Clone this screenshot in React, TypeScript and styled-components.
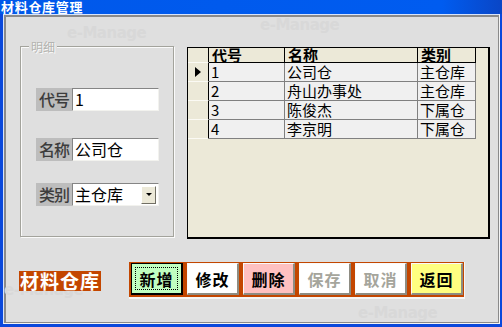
import React from 'react';
import styled, { createGlobalStyle } from 'styled-components';

const GlobalStyle = createGlobalStyle`
  html, body {
    margin: 0;
    padding: 0;
    background: #dfdfdf;
  }
  body {
    font-family: "Noto Sans CJK SC", "Noto Sans", sans-serif;
  }
`;

const cjk = `"Noto Sans CJK SC", "Noto Sans", sans-serif`;

const rows = [
  { code: '1', name: '公司仓', kind: '主仓库' },
  { code: '2', name: '舟山办事处', kind: '主仓库' },
  { code: '3', name: '陈俊杰', kind: '下属仓' },
  { code: '4', name: '李京明', kind: '下属仓' },
];

const buttons = [
  { text: '新增', bg: '#c0ffc0', focused: true },
  { text: '修改', bg: '#ffffff' },
  { text: '删除', bg: '#ffc0c0' },
  { text: '保存', bg: '#ffffff', disabled: true },
  { text: '取消', bg: '#ffffff', disabled: true },
  { text: '返回', bg: '#ffff80' },
];

const Window = styled.div`
  width: 502px;
  height: 327px;
  display: flex;
  flex-direction: column;
  overflow: hidden;
  background: #0a48dc;
`;

const TitleBar = styled.div`
  height: 14px;
  flex-shrink: 0;
  padding-left: 1px;
  background: linear-gradient(to right, #0058ea 0%, #005cf0 88%, #0a46c6 100%);
  color: #fff;
  font: 700 13px/14px ${cjk};
  letter-spacing: 0.7px;
  white-space: nowrap;
`;

const Frame = styled.div`
  flex: 1;
  display: flex;
  margin: 0 2px 3px 3px;
  border-top: 1px solid #d8e4fb;
  border-left: 1px solid #d8e4fb;
  border-right: 1px solid #f4f4f4;
  border-bottom: 1px solid #f4f4f4;
`;

const Content = styled.div`
  flex: 1;
  position: relative;
  z-index: 0;
  background: #dfdfdf;
  border-top: 2px solid #8a8a8a;
  border-left: 2px solid #8a8a8a;
  border-right: 1px solid #8a8a8a;
  border-bottom: 1px solid #8a8a8a;
  padding: 29px 0 0 13px;
`;

const Watermark = styled.span<{ $x: number; $y: number }>`
  position: absolute;
  left: ${(p) => p.$x}px;
  top: ${(p) => p.$y}px;
  z-index: -1;
  color: #d8d8d8;
  font: 700 15px/15px "DejaVu Sans", sans-serif;
  letter-spacing: -0.5px;
  pointer-events: none;
`;

const TopRow = styled.div`
  display: flex;
  align-items: flex-start;
`;

const GroupBox = styled.div`
  position: relative;
  box-sizing: border-box;
  width: 154px;
  height: 191px;
  margin-left: 1px;
  border: 1px solid #a3a39c;
  box-shadow: inset 1px 1px 0 #fafafa, 1px 1px 0 #fafafa;
  padding: 41px 0 0 15px;
  display: flex;
  flex-direction: column;
`;

const Legend = styled.span`
  position: absolute;
  top: -7px;
  left: 8px;
  padding: 0 2px;
  background: #dfdfdf;
  color: #b4b4b0;
  text-shadow: 1px 1px 0 #fafafa;
  font: 12px/13px ${cjk};
`;

const Field = styled.div<{ $mt: number }>`
  display: flex;
  height: 23px;
  margin-top: ${(p) => p.$mt}px;
`;

const FieldLabel = styled.div`
  width: 36px;
  background: #bdbdbd;
  color: #3c3c3c;
  font: 500 16px/23px ${cjk};
  text-align: center;
  letter-spacing: -1px;
`;

const InputBox = styled.div`
  width: 87px;
  box-sizing: border-box;
  display: flex;
  align-items: center;
  background: #fff;
  border-top: 1px solid #858585;
  border-left: 1px solid #858585;
  border-right: 1px solid #f2f2ee;
  border-bottom: 1px solid #f2f2ee;
  padding: 0 2px 0 2px;
  font: 16px/21px ${cjk};
  color: #000;
`;

const ComboText = styled.span`
  flex: 1;
`;

const ArrowButton = styled.span`
  width: 15px;
  height: 18px;
  box-sizing: border-box;
  display: flex;
  align-items: center;
  justify-content: center;
  background: #ece9d8;
  border-top: 1px solid #fff;
  border-left: 1px solid #fff;
  border-right: 1px solid #716f64;
  border-bottom: 1px solid #716f64;

  &::after {
    content: '';
    border-left: 3px solid transparent;
    border-right: 3px solid transparent;
    border-top: 3px solid #000;
  }
`;

const GridPanel = styled.div`
  width: 303px;
  height: 192px;
  box-sizing: border-box;
  margin: 1px 0 0 13px;
  background: #ece9d8;
  border: 1px solid #000;
  border-width: 1px 2px 2px 1px;
`;

const Table = styled.div`
  display: grid;
  grid-template-columns: 21px 76px 133px 58px;
  grid-template-rows: 15px repeat(4, 19px);
`;

const HeadCell = styled.div`
  border-right: 1px solid #000;
  border-bottom: 1px solid #000;
  padding-left: 3px;
  font: 700 15px/14px ${cjk};
  color: #000;
  white-space: nowrap;
`;

const Indicator = styled.div<{ $active?: boolean }>`
  border-right: 1px solid #000;
  border-bottom: 1px solid #fbfaf4;
  display: flex;
  align-items: center;
  justify-content: center;

  &::after {
    content: '';
    display: ${(p) => (p.$active ? 'block' : 'none')};
    border-top: 5px solid transparent;
    border-bottom: 5px solid transparent;
    border-left: 6px solid #000;
  }
`;

const Cell = styled.div`
  background: #f0f0f0;
  border-right: 1px solid #808080;
  border-bottom: 1px solid #808080;
  padding-left: 2px;
  font: 15px/18px ${cjk};
  color: #000;
  white-space: nowrap;
`;

const BottomRow = styled.div`
  display: flex;
  align-items: flex-start;
  margin-top: 23px;
`;

const Brand = styled.div`
  margin-top: 9px;
  height: 20px;
  padding: 0 1px;
  background: #c34600;
  color: #fff;
  font: 700 19px/20px ${cjk};
  letter-spacing: 1px;
`;

const ButtonBar = styled.div`
  display: flex;
  gap: 4px;
  margin-left: 28px;
  padding: 1px 1px 2px 2px;
  background: #c34600;
  border-right: 1px solid #f6f6f6;
  border-bottom: 2px solid #f6f6f6;
`;

const Button = styled.div<{ $bg: string; $disabled?: boolean; $focused?: boolean }>`
  position: relative;
  width: 52px;
  height: 32px;
  box-sizing: border-box;
  display: flex;
  align-items: center;
  justify-content: center;
  background: ${(p) => p.$bg};
  border-top: 1px solid ${(p) => (p.$focused ? '#000' : '#fafafa')};
  border-left: 1px solid ${(p) => (p.$focused ? '#000' : '#fafafa')};
  border-right: 2px solid ${(p) => (p.$focused ? '#000' : '#8e8c82')};
  border-bottom: 2px solid ${(p) => (p.$focused ? '#000' : '#8e8c82')};
  color: ${(p) => (p.$disabled ? '#a5a59c' : '#000')};
  font: 700 16px/16px ${cjk};
  letter-spacing: 1px;

  &::before {
    content: '';
    display: ${(p) => (p.$focused ? 'block' : 'none')};
    position: absolute;
    inset: 3px;
    border: 1px dotted #000;
  }
`;

export default function App() {
  return (
    <>
      <GlobalStyle />
      <Window>
        <TitleBar>材料仓库管理</TitleBar>
        <Frame>
          <Content>
            <Watermark $x={61} $y={9}>e-Manage</Watermark>
            <Watermark $x={254} $y={1}>e-Manage</Watermark>
            <Watermark $x={-2} $y={266}>e-Manage</Watermark>
            <Watermark $x={352} $y={289}>e-Manage</Watermark>
            <TopRow>
              <GroupBox>
                <Legend>明细</Legend>
                <Field $mt={0}>
                  <FieldLabel>代号</FieldLabel>
                  <InputBox>1</InputBox>
                </Field>
                <Field $mt={27}>
                  <FieldLabel>名称</FieldLabel>
                  <InputBox>公司仓</InputBox>
                </Field>
                <Field $mt={22}>
                  <FieldLabel>类别</FieldLabel>
                  <InputBox>
                    <ComboText>主仓库</ComboText>
                    <ArrowButton />
                  </InputBox>
                </Field>
              </GroupBox>
              <GridPanel>
                <Table>
                  <Indicator />
                  <HeadCell>代号</HeadCell>
                  <HeadCell>名称</HeadCell>
                  <HeadCell>类别</HeadCell>
                  {rows.map((r, i) => (
                    <React.Fragment key={r.code}>
                      <Indicator $active={i === 0} />
                      <Cell>{r.code}</Cell>
                      <Cell>{r.name}</Cell>
                      <Cell>{r.kind}</Cell>
                    </React.Fragment>
                  ))}
                </Table>
              </GridPanel>
            </TopRow>
            <BottomRow>
              <Brand>材料仓库</Brand>
              <ButtonBar>
                {buttons.map((b) => (
                  <Button key={b.text} $bg={b.bg} $disabled={b.disabled} $focused={b.focused}>
                    {b.text}
                  </Button>
                ))}
              </ButtonBar>
            </BottomRow>
          </Content>
        </Frame>
      </Window>
    </>
  );
}
